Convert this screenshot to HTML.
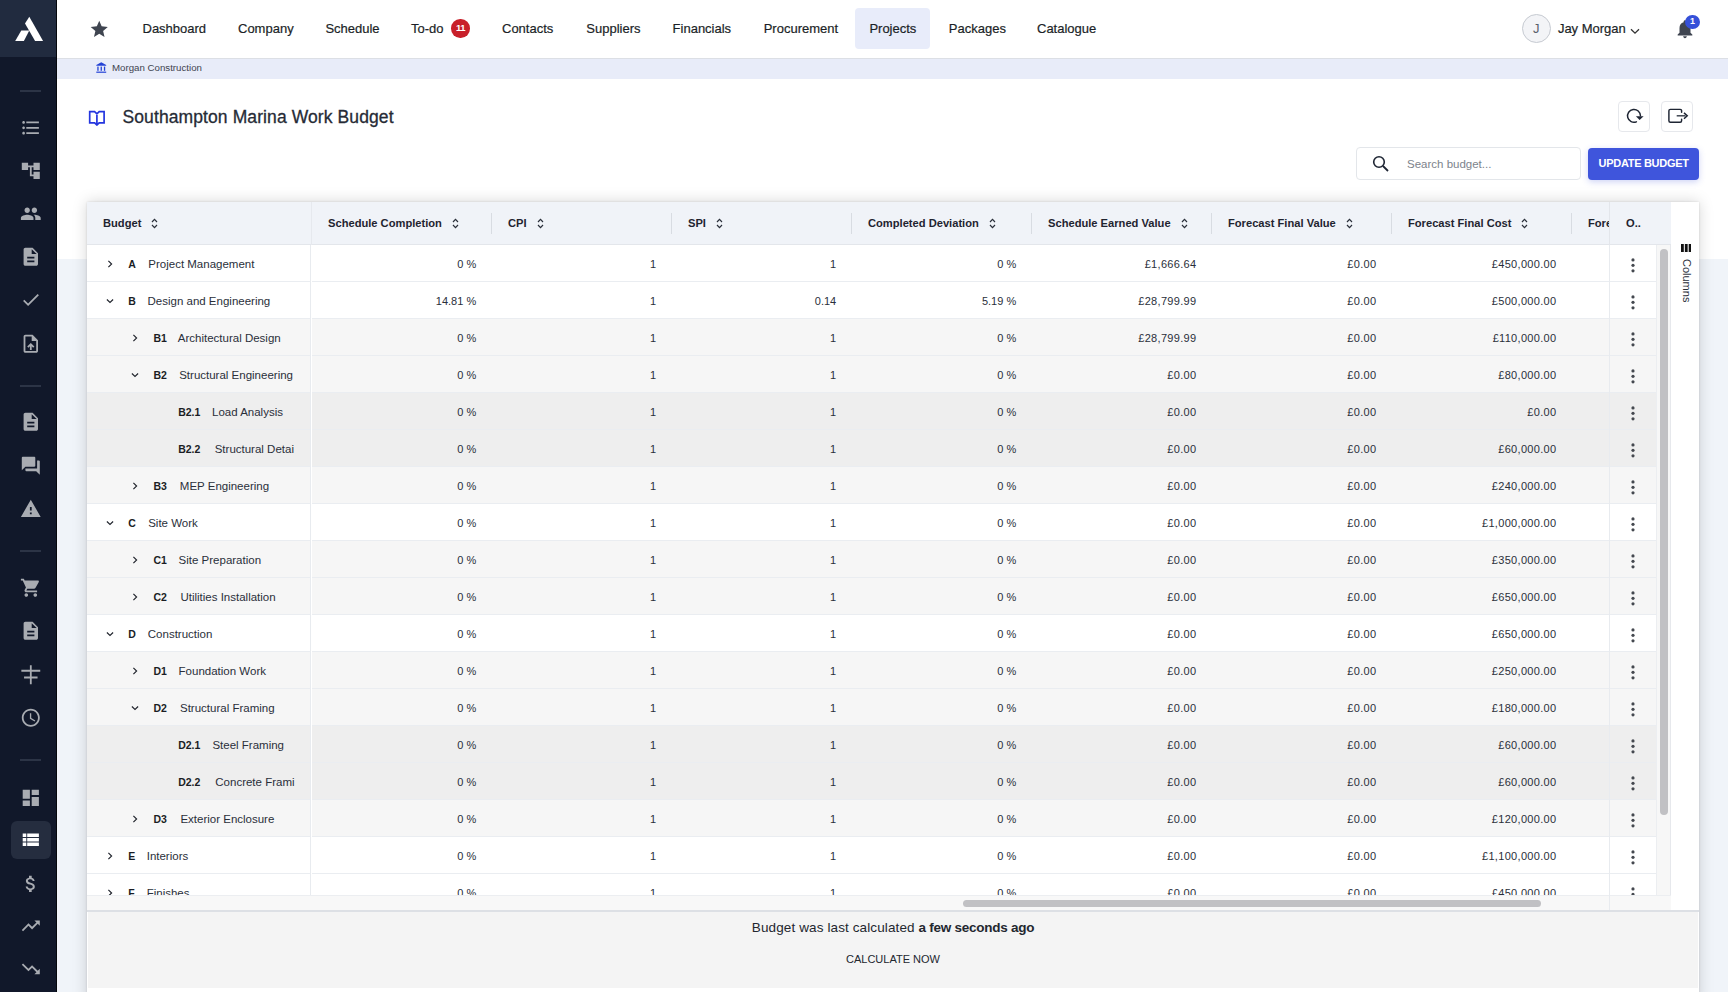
<!DOCTYPE html>
<html><head><meta charset="utf-8">
<style>
*{box-sizing:border-box;margin:0;padding:0}
html,body{width:1728px;height:992px;overflow:hidden;background:#fff;font-family:"Liberation Sans",sans-serif;color:#1f2430}
.abs{position:absolute}
#side{position:absolute;left:0;top:0;width:57px;height:992px;background:#11182a;border-right:1px solid #05070c}
#logo{position:absolute;left:0;top:0;width:56px;height:57px;background:#212b3f}
.sic{position:absolute;left:18px;width:22px;height:22px}
.sdiv{position:absolute;left:20px;width:21px;height:2px;background:#2c3446}
#nav{position:absolute;left:57px;top:0;width:1671px;height:59px;background:#fff;border-bottom:1px solid #dcdfe5}
.nv{position:absolute;top:21.4px;font-size:13px;font-weight:400;color:#1b1f27;white-space:nowrap;-webkit-text-stroke:0.2px #1b1f27}
#crumb{position:absolute;left:57px;top:59px;width:1671px;height:20px;background:#e8ecf9}
#pagebg{position:absolute;left:57px;top:259px;width:1671px;height:733px;background:#f0f4f9}
#card{position:absolute;left:87px;top:202px;width:1612px;height:800px;background:#fff;box-shadow:0 0 2px rgba(0,0,0,0.12),0 0 14px rgba(0,0,0,0.17)}
#hdr{position:absolute;left:0;top:0;width:1583px;height:43.2px;background:#f0f3f8;border-bottom:1px solid #e3e6eb}
.hd{position:absolute;top:15.0px;font-size:11.15px;font-weight:700;color:#1f2430;white-space:nowrap}
.sort{position:absolute;top:16px;width:7px;height:11px}
.hsep{position:absolute;top:10.5px;width:1px;height:21px;background:#d8dce2}
.rows{position:absolute;overflow:hidden}
.row{position:absolute;left:0;right:0;height:36.9px;border-bottom:1px solid #eaedf1}
.code{position:absolute;top:12.8px;font-size:10.5px;font-weight:700;color:#1a1d24;white-space:nowrap}
.name{position:absolute;top:12.7px;font-size:11.5px;color:#2a2f3a;white-space:nowrap}
.chw{position:absolute;top:14.7px;width:8px;height:8px;line-height:0}
.num{position:absolute;top:12.7px;width:164.2px;text-align:right;font-size:11px;color:#2a2f3a;white-space:nowrap}
.dots{position:absolute;left:21.4px;top:12.4px;width:4px;height:15px}
</style></head><body>
<div id="pagebg"></div>

<!-- Sidebar -->
<div id="side">
  <div id="logo">
    <svg class="abs" style="left:0;top:0" width="56" height="57" viewBox="0 0 56 57"><path d="M29.3 16.7 L43.1 41.1 L35.1 41.1 L25 23.6 Z" fill="#fff"/><path d="M21.3 30.5 L29.3 30.5 L23.9 41.1 L15.2 41.1 Z" fill="#fff"/></svg>
  </div>
  <div class="sdiv" style="top:90px"></div>
<div class="sdiv" style="top:385px"></div>
<div class="sdiv" style="top:550px"></div>
<div class="sdiv" style="top:759px"></div>
<div class="abs" style="left:11px;top:821px;width:40px;height:38px;border-radius:6px;background:#252d3f"></div>
<svg class="abs" style="left:19.8px;top:116.7px" width="21.6" height="21.6" viewBox="0 0 24 24"><path d="M4 10.5c-.83 0-1.5.67-1.5 1.5s.67 1.5 1.5 1.5 1.5-.67 1.5-1.5-.67-1.5-1.5-1.5zm0-6c-.83 0-1.5.67-1.5 1.5S3.17 7.5 4 7.5 5.5 6.83 5.5 6 4.83 4.5 4 4.5zm0 12c-.83 0-1.5.68-1.5 1.5s.68 1.5 1.5 1.5 1.5-.68 1.5-1.5-.67-1.5-1.5-1.5zM7 19h14v-2H7v2zm0-6h14v-2H7v2zm0-8v2h14V5H7z" fill="#a9acb2"/></svg>
<svg class="abs" style="left:19.8px;top:159.7px" width="21.6" height="21.6" viewBox="0 0 24 24"><path d="M22 11V3h-7v3H9V3H2v8h7V8h2v10h4v3h7v-8h-7v3h-2V8h2v3z" fill="#a9acb2"/></svg>
<svg class="abs" style="left:19.8px;top:203.2px" width="21.6" height="21.6" viewBox="0 0 24 24"><path d="M16 11c1.66 0 2.99-1.34 2.99-3S17.66 5 16 5c-1.66 0-3 1.34-3 3s1.34 3 3 3zm-8 0c1.66 0 2.99-1.34 2.99-3S9.66 5 8 5C6.34 5 5 6.34 5 8s1.34 3 3 3zm0 2c-2.33 0-7 1.17-7 3.5V19h14v-2.5c0-2.33-4.67-3.5-7-3.5zm8 0c-.29 0-.62.02-.97.05 1.160.84 1.97 1.97 1.97 3.45V19h6v-2.5c0-2.33-4.67-3.5-7-3.5z" fill="#a9acb2"/></svg>
<svg class="abs" style="left:19.8px;top:246.2px" width="21.6" height="21.6" viewBox="0 0 24 24"><path d="M14 2H6c-1.1 0-1.99.9-1.99 2L4 20c0 1.1.89 2 1.99 2H18c1.1 0 2-.9 2-2V8l-6-6zm2 16H8v-2h8v2zm0-4H8v-2h8v2zm-3-5V3.5L18.5 9H13z" fill="#a9acb2"/></svg>
<svg class="abs" style="left:19.8px;top:289.2px" width="21.6" height="21.6" viewBox="0 0 24 24"><path d="M9 16.17L4.83 12l-1.42 1.41L9 19 21 7l-1.41-1.41z" fill="#a9acb2"/></svg>
<svg class="abs" style="left:19.8px;top:332.7px" width="21.6" height="21.6" viewBox="0 0 24 24"><path d="M14 2H6c-1.1 0-1.99.9-1.99 2L4 20c0 1.1.89 2 1.99 2H18c1.1 0 2-.9 2-2V8l-6-6zm4 18H6V4h7v5h5v11zM8 15.01l1.41 1.41L11 14.84V19h2v-4.16l1.59 1.59L16 15.01 12.01 11z" fill="#a9acb2"/></svg>
<svg class="abs" style="left:19.8px;top:411.2px" width="21.6" height="21.6" viewBox="0 0 24 24"><path d="M14 2H6c-1.1 0-1.99.9-1.99 2L4 20c0 1.1.89 2 1.99 2H18c1.1 0 2-.9 2-2V8l-6-6zm2 16H8v-2h8v2zm0-4H8v-2h8v2zm-3-5V3.5L18.5 9H13z" fill="#a9acb2"/></svg>
<svg class="abs" style="left:19.8px;top:454.7px" width="21.6" height="21.6" viewBox="0 0 24 24"><path d="M21 6h-2v9H6v2c0 .55.45 1 1 1h11l4 4V7c0-.55-.45-1-1-1zm-4 6V3c0-.55-.45-1-1-1H3c-.55 0-1 .45-1 1v14l4-4h10c.55 0 1-.45 1-1z" fill="#a9acb2"/></svg>
<svg class="abs" style="left:19.8px;top:498.2px" width="21.6" height="21.6" viewBox="0 0 24 24"><path d="M1 21h22L12 2 1 21zm12-3h-2v-2h2v2zm0-4h-2v-4h2v4z" fill="#a9acb2"/></svg>
<svg class="abs" style="left:19.8px;top:577.2px" width="21.6" height="21.6" viewBox="0 0 24 24"><path d="M7 18c-1.1 0-1.99.9-1.99 2S5.9 22 7 22s2-.9 2-2-.9-2-2-2zM1 2v2h2l3.6 7.59-1.35 2.45c-.16.28-.25.61-.25.96 0 1.1.9 2 2 2h12v-2H7.42c-.14 0-.25-.11-.25-.25l.03-.12.9-1.630h7.45c.75 0 1.41-.41 1.75-1.03l3.58-6.49C21.25 4.82 20.76 4 20 4H5.21l-.94-2H1zm16 16c-1.1 0-1.99.9-1.99 2s.89 2 1.990 2 2-.9 2-2-.9-2-2-2z" fill="#a9acb2"/></svg>
<svg class="abs" style="left:19.8px;top:620.2px" width="21.6" height="21.6" viewBox="0 0 24 24"><path d="M14 2H6c-1.1 0-1.99.9-1.99 2L4 20c0 1.1.89 2 1.99 2H18c1.1 0 2-.9 2-2V8l-6-6zm2 16H8v-2h8v2zm0-4H8v-2h8v2zm-3-5V3.5L18.5 9H13z" fill="#a9acb2"/></svg>
<svg class="abs" style="left:19.8px;top:663.7px" width="21.6" height="21.6" viewBox="0 0 24 24"><path d="M11 1.5h2v21h-2z M1.5 6.5h21v2h-21z M4.5 14h15v2h-15z" fill="#a9acb2"/></svg>
<svg class="abs" style="left:19.8px;top:706.7px" width="21.6" height="21.6" viewBox="0 0 24 24"><path d="M11.99 2C6.47 2 2 6.48 2 12s4.47 10 9.99 10C17.52 22 22 17.52 22 12S17.52 2 11.99 2zM12 20c-4.42 0-8-3.58-8-8s3.58-8 8-8 8 3.58 8 8-3.58 8-8 8zm.5-13H11v6l5.25 3.15.75-1.23-4.5-2.67z" fill="#a9acb2"/></svg>
<svg class="abs" style="left:19.8px;top:786.7px" width="21.6" height="21.6" viewBox="0 0 24 24"><path d="M3 13h8V3H3v10zm0 8h8v-6H3v6zm10 0h8V11h-8v10zm0-18v6h8V3h-8z" fill="#a9acb2"/></svg>
<svg class="abs" style="left:19.8px;top:829.2px" width="21.6" height="21.6" viewBox="0 0 24 24"><path d="M3 14h4v-4H3v4zm0 5h4v-4H3v4zM3 9h4V5H3v4zm5 5h13v-4H8v4zm0 5h13v-4H8v4zM8 5v4h13V5H8z" fill="#ffffff"/></svg>
<svg class="abs" style="left:19.8px;top:872.7px" width="21.6" height="21.6" viewBox="0 0 24 24"><path d="M11.8 10.9c-2.27-.59-3-1.2-3-2.15 0-1.09 1.010-1.85 2.7-1.85 1.78 0 2.44.85 2.5 2.1h2.21c-.07-1.72-1.12-3.3-3.21-3.81V3h-3v2.160c-1.94.42-3.5 1.68-3.5 3.61 0 2.31 1.91 3.46 4.7 4.13 2.5.6 3 1.48 3 2.41 0 .69-.49 1.79-2.7 1.79-2.06 0-2.87-.92-2.98-2.1h-2.2c.12 2.19 1.76 3.42 3.68 3.830V21h3v-2.15c1.95-.37 3.5-1.5 3.5-3.55 0-2.84-2.43-3.81-4.7-4.4z" fill="#a9acb2"/></svg>
<svg class="abs" style="left:19.8px;top:915.2px" width="21.6" height="21.6" viewBox="0 0 24 24"><path d="M16 6l2.29 2.29-4.88 4.88-4-4L2 16.59 3.41 18l6-6 4 4 6.3-6.29L22 12V6z" fill="#a9acb2"/></svg>
<svg class="abs" style="left:19.8px;top:958.2px" width="21.6" height="21.6" viewBox="0 0 24 24"><path d="M16 18l2.29-2.29-4.88-4.88-4 4L2 7.41 3.41 6l6 6 4-4 6.3 6.29L22 12v6z" fill="#a9acb2"/></svg>
</div>

<!-- Nav -->
<div id="nav">
  <svg class="abs" style="left:32.3px;top:18.5px" width="20.5" height="20.5" viewBox="0 0 24 24"><path d="M12 17.27L18.18 21l-1.64-7.03L22 9.24l-7.19-.61L12 2 9.19 8.63 2 9.240l5.46 4.73L5.82 21z" fill="#3f4550"/></svg>
  <span class="nv" style="left:85.5px">Dashboard</span>
  <span class="nv" style="left:181px">Company</span>
  <span class="nv" style="left:268.4px">Schedule</span>
  <span class="nv" style="left:354px">To-do</span>
  <span class="abs" style="left:394.4px;top:19.4px;width:18.3px;height:18.3px;border-radius:50%;background:#c8202a;color:#fff;font-size:9.5px;font-weight:700;text-align:center;line-height:18.3px;letter-spacing:-0.5px">11</span>
  <span class="nv" style="left:445px">Contacts</span>
  <span class="nv" style="left:529.3px">Suppliers</span>
  <span class="nv" style="left:615.6px">Financials</span>
  <span class="nv" style="left:706.7px">Procurement</span>
  <span class="abs" style="left:797.8px;top:8.1px;width:75.4px;height:40.9px;border-radius:4px;background:#e8ecfa"></span>
  <span class="nv" style="left:812.4px">Projects</span>
  <span class="nv" style="left:891.8px">Packages</span>
  <span class="nv" style="left:980px">Catalogue</span>
  <span class="abs" style="left:1464.8px;top:14.4px;width:29px;height:29px;border-radius:50%;border:1px solid #c6cad1;background:#f3f4f7;color:#5a606b;font-size:13px;text-align:center;line-height:27px">J</span>
  <span class="nv" style="left:1500.9px">Jay Morgan</span>
  <svg class="abs" style="left:1573px;top:28px" width="10" height="7" viewBox="0 0 10 7"><path d="M1 1.2 L5 5.2 L9 1.2" fill="none" stroke="#333" stroke-width="1.3"/></svg>
  <svg class="abs" style="left:1617px;top:17.5px" width="22" height="22" viewBox="0 0 24 24"><path d="M12 22c1.1 0 2-.9 2-2h-4c0 1.1.89 2 2 2zm6-6v-5c0-3.07-1.64-5.64-4.5-6.32V4c0-.83-.67-1.5-1.5-1.5s-1.5.67-1.5 1.5v.68C7.63 5.36 6 7.92 6 11v5l-2 2v1h16v-1l-2-2z" fill="#3f4550"/></svg>
  <span class="abs" style="left:1628.3px;top:14.8px;width:14.5px;height:14px;border-radius:50%;background:#3550d8;color:#fff;font-size:9px;font-weight:700;text-align:center;line-height:13.5px">1</span>
</div>

<!-- Breadcrumb -->
<div id="crumb">
  <svg class="abs" style="left:38.5px;top:3.3px" width="11" height="11" viewBox="0 0 11 11"><path d="M5.25 0.2 L10.2 2.9 L10.2 3.7 L0.3 3.7 L0.3 2.9 Z" fill="#2443d6"/><rect x="1.3" y="4.6" width="1.3" height="4.2" fill="#2443d6"/><rect x="4.6" y="4.6" width="1.3" height="4.2" fill="#2443d6"/><rect x="7.9" y="4.6" width="1.3" height="4.2" fill="#2443d6"/><rect x="0.3" y="9.6" width="9.9" height="1.2" fill="#2443d6"/></svg>
  <span class="abs" style="left:55px;top:3.2px;font-size:9.7px;color:#3f4450;white-space:nowrap">Morgan Construction</span>
</div>

<!-- Title -->
<svg class="abs" style="left:88.2px;top:110px" width="18" height="16" viewBox="0 0 18 16"><path d="M1.7 1.7 H6.6 L8.9 3.8 L11.2 1.7 H16.1 V12.9 H11.2 L8.9 15 L6.6 12.9 H1.7 Z M8.9 3.8 V15" fill="none" stroke="#2436df" stroke-width="1.7" stroke-linejoin="miter"/></svg>
<span class="abs" style="left:122.5px;top:107.2px;font-size:17.5px;letter-spacing:0.1px;color:#262b36;white-space:nowrap;-webkit-text-stroke:0.3px #262b36">Southampton Marina Work Budget</span>

<!-- Right buttons -->
<div class="abs" style="left:1618px;top:101px;width:32px;height:31px;border:1px solid #e6e8ec;border-radius:4px;background:#fff"></div>
<svg class="abs" style="left:1624px;top:107px" width="22" height="20" viewBox="0 0 22 20"><path d="M12.4 14.85 A6.45 6.45 0 1 1 16.45 8.8" fill="none" stroke="#1e2533" stroke-width="1.45" stroke-linecap="round"/><path d="M11.9 9.2 L19.6 9.2 L15.6 12.9 Z" fill="#1e2533"/></svg>
<div class="abs" style="left:1661px;top:101px;width:32px;height:31px;border:1px solid #e6e8ec;border-radius:4px;background:#fff"></div>
<svg class="abs" style="left:1667px;top:107px" width="22" height="20" viewBox="0 0 22 20"><path d="M14.6 5.2 V3.8 Q14.6 2.35 13.1 2.35 H3.4 Q1.9 2.35 1.9 3.8 V13.85 Q1.9 15.3 3.4 15.3 H13.1 Q14.6 15.3 14.6 13.85 V12.3" fill="none" stroke="#1e2533" stroke-width="1.45" stroke-linecap="round"/><path d="M9.7 8.8 H18.5" stroke="#3a404b" stroke-width="1.45"/><path d="M17 5.9 L20.2 8.8 L17 11.7" fill="none" stroke="#1e2533" stroke-width="1.5"/></svg>

<!-- Search -->
<div class="abs" style="left:1356px;top:147px;width:225px;height:33px;border:1px solid #e3e6ea;border-radius:4px;background:#fff"></div>
<svg class="abs" style="left:1371px;top:154px" width="20" height="20" viewBox="0 0 20 20"><circle cx="8" cy="8" r="5.3" fill="none" stroke="#1e2533" stroke-width="1.6"/><path d="M12 12 L17 17" stroke="#1e2533" stroke-width="1.8"/></svg>
<span class="abs" style="left:1407px;top:158px;font-size:11.5px;color:#7d838c;white-space:nowrap">Search budget...</span>
<div class="abs" style="left:1588px;top:148px;width:111px;height:32px;border-radius:4px;background:#3f55dc;box-shadow:0 2px 6px rgba(63,85,220,0.25)"></div>
<span class="abs" style="left:1598.6px;top:157.1px;font-size:11px;font-weight:700;color:#fff;white-space:nowrap;letter-spacing:-0.3px">UPDATE BUDGET</span>

<!-- Card -->
<div id="card">
  <div id="hdr">
    <span class="hd" style="left:16px">Budget</span>
    <span class="abs" style="left:224px;top:0;width:1px;height:43.2px;background:#e6e9ee"></span>
    <svg class="sort" style="left:64px" width="7" height="11" viewBox="0 0 7 11"><path d="M1 4 L3.5 1.3 L6 4 M1 7 L3.5 9.7 L6 7" fill="none" stroke="#2a2f3a" stroke-width="1.2"/></svg>
<span class="hd" style="left:241px">Schedule Completion</span>
<svg class="sort" style="left:364.90625px" width="7" height="11" viewBox="0 0 7 11"><path d="M1 4 L3.5 1.3 L6 4 M1 7 L3.5 9.7 L6 7" fill="none" stroke="#2a2f3a" stroke-width="1.2"/></svg>
<span class="hsep" style="left:404px"></span>
<span class="hd" style="left:421px">CPI</span>
<svg class="sort" style="left:449.578125px" width="7" height="11" viewBox="0 0 7 11"><path d="M1 4 L3.5 1.3 L6 4 M1 7 L3.5 9.7 L6 7" fill="none" stroke="#2a2f3a" stroke-width="1.2"/></svg>
<span class="hsep" style="left:584px"></span>
<span class="hd" style="left:601px">SPI</span>
<svg class="sort" style="left:628.96875px" width="7" height="11" viewBox="0 0 7 11"><path d="M1 4 L3.5 1.3 L6 4 M1 7 L3.5 9.7 L6 7" fill="none" stroke="#2a2f3a" stroke-width="1.2"/></svg>
<span class="hsep" style="left:764px"></span>
<span class="hd" style="left:781px">Completed Deviation</span>
<svg class="sort" style="left:901.8125px" width="7" height="11" viewBox="0 0 7 11"><path d="M1 4 L3.5 1.3 L6 4 M1 7 L3.5 9.7 L6 7" fill="none" stroke="#2a2f3a" stroke-width="1.2"/></svg>
<span class="hsep" style="left:944px"></span>
<span class="hd" style="left:961px">Schedule Earned Value</span>
<svg class="sort" style="left:1093.609375px" width="7" height="11" viewBox="0 0 7 11"><path d="M1 4 L3.5 1.3 L6 4 M1 7 L3.5 9.7 L6 7" fill="none" stroke="#2a2f3a" stroke-width="1.2"/></svg>
<span class="hsep" style="left:1124px"></span>
<span class="hd" style="left:1141px">Forecast Final Value</span>
<svg class="sort" style="left:1258.734375px" width="7" height="11" viewBox="0 0 7 11"><path d="M1 4 L3.5 1.3 L6 4 M1 7 L3.5 9.7 L6 7" fill="none" stroke="#2a2f3a" stroke-width="1.2"/></svg>
<span class="hsep" style="left:1304px"></span>
<span class="hd" style="left:1321px">Forecast Final Cost</span>
<svg class="sort" style="left:1434.390625px" width="7" height="11" viewBox="0 0 7 11"><path d="M1 4 L3.5 1.3 L6 4 M1 7 L3.5 9.7 L6 7" fill="none" stroke="#2a2f3a" stroke-width="1.2"/></svg>
<span class="hsep" style="left:1484px"></span>
<span class="hd" style="left:1501px">Fore</span>
  </div>
  <!-- pinned left -->
  <div class="rows" style="left:0;top:43.2px;width:224px;height:650px;border-right:1px solid #e8ebef">
    <div class="row" style="top:0px;background:#ffffff"><span class="chw" style="left:19.2px"><svg class="chev" width="8" height="8" viewBox="0 0 8 8"><path d="M2.4 0.9 L5.6 4 L2.4 7.1" fill="none" stroke="#1f232b" stroke-width="1.15"/></svg></span><span class="code" style="left:41.2px">A</span><span class="name" style="left:61.30000000000001px">Project Management</span></div>
<div class="row" style="top:37px;background:#ffffff"><span class="chw" style="left:19.2px"><svg class="chev" width="8" height="8" viewBox="0 0 8 8"><path d="M0.9 2.5 L4 5.5 L7.1 2.5" fill="none" stroke="#1f232b" stroke-width="1.15"/></svg></span><span class="code" style="left:41.2px">B</span><span class="name" style="left:60.5px">Design and Engineering</span></div>
<div class="row" style="top:74px;background:#f6f6f6"><span class="chw" style="left:44.2px"><svg class="chev" width="8" height="8" viewBox="0 0 8 8"><path d="M2.4 0.9 L5.6 4 L2.4 7.1" fill="none" stroke="#1f232b" stroke-width="1.15"/></svg></span><span class="code" style="left:66.4px">B1</span><span class="name" style="left:90.80000000000001px">Architectural Design</span></div>
<div class="row" style="top:111px;background:#f6f6f6"><span class="chw" style="left:44.2px"><svg class="chev" width="8" height="8" viewBox="0 0 8 8"><path d="M0.9 2.5 L4 5.5 L7.1 2.5" fill="none" stroke="#1f232b" stroke-width="1.15"/></svg></span><span class="code" style="left:66.4px">B2</span><span class="name" style="left:92.19999999999999px">Structural Engineering</span></div>
<div class="row" style="top:148px;background:#eeeeee"><span class="code" style="left:91.2px">B2.1</span><span class="name" style="left:125px">Load Analysis</span></div>
<div class="row" style="top:185px;background:#eeeeee"><span class="code" style="left:91.2px">B2.2</span><span class="name" style="left:127.69999999999999px">Structural Detai</span></div>
<div class="row" style="top:222px;background:#f6f6f6"><span class="chw" style="left:44.2px"><svg class="chev" width="8" height="8" viewBox="0 0 8 8"><path d="M2.4 0.9 L5.6 4 L2.4 7.1" fill="none" stroke="#1f232b" stroke-width="1.15"/></svg></span><span class="code" style="left:66.4px">B3</span><span class="name" style="left:92.80000000000001px">MEP Engineering</span></div>
<div class="row" style="top:259px;background:#ffffff"><span class="chw" style="left:19.2px"><svg class="chev" width="8" height="8" viewBox="0 0 8 8"><path d="M0.9 2.5 L4 5.5 L7.1 2.5" fill="none" stroke="#1f232b" stroke-width="1.15"/></svg></span><span class="code" style="left:41.2px">C</span><span class="name" style="left:61.19999999999999px">Site Work</span></div>
<div class="row" style="top:296px;background:#f6f6f6"><span class="chw" style="left:44.2px"><svg class="chev" width="8" height="8" viewBox="0 0 8 8"><path d="M2.4 0.9 L5.6 4 L2.4 7.1" fill="none" stroke="#1f232b" stroke-width="1.15"/></svg></span><span class="code" style="left:66.4px">C1</span><span class="name" style="left:91.6px">Site Preparation</span></div>
<div class="row" style="top:333px;background:#f6f6f6"><span class="chw" style="left:44.2px"><svg class="chev" width="8" height="8" viewBox="0 0 8 8"><path d="M2.4 0.9 L5.6 4 L2.4 7.1" fill="none" stroke="#1f232b" stroke-width="1.15"/></svg></span><span class="code" style="left:66.4px">C2</span><span class="name" style="left:93.4px">Utilities Installation</span></div>
<div class="row" style="top:370px;background:#ffffff"><span class="chw" style="left:19.2px"><svg class="chev" width="8" height="8" viewBox="0 0 8 8"><path d="M0.9 2.5 L4 5.5 L7.1 2.5" fill="none" stroke="#1f232b" stroke-width="1.15"/></svg></span><span class="code" style="left:41.2px">D</span><span class="name" style="left:60.80000000000001px">Construction</span></div>
<div class="row" style="top:407px;background:#f6f6f6"><span class="chw" style="left:44.2px"><svg class="chev" width="8" height="8" viewBox="0 0 8 8"><path d="M2.4 0.9 L5.6 4 L2.4 7.1" fill="none" stroke="#1f232b" stroke-width="1.15"/></svg></span><span class="code" style="left:66.4px">D1</span><span class="name" style="left:91.6px">Foundation Work</span></div>
<div class="row" style="top:444px;background:#f6f6f6"><span class="chw" style="left:44.2px"><svg class="chev" width="8" height="8" viewBox="0 0 8 8"><path d="M0.9 2.5 L4 5.5 L7.1 2.5" fill="none" stroke="#1f232b" stroke-width="1.15"/></svg></span><span class="code" style="left:66.4px">D2</span><span class="name" style="left:93px">Structural Framing</span></div>
<div class="row" style="top:481px;background:#eeeeee"><span class="code" style="left:91.2px">D2.1</span><span class="name" style="left:125.4px">Steel Framing</span></div>
<div class="row" style="top:518px;background:#eeeeee"><span class="code" style="left:91.2px">D2.2</span><span class="name" style="left:128.3px">Concrete Frami</span></div>
<div class="row" style="top:555px;background:#f6f6f6"><span class="chw" style="left:44.2px"><svg class="chev" width="8" height="8" viewBox="0 0 8 8"><path d="M2.4 0.9 L5.6 4 L2.4 7.1" fill="none" stroke="#1f232b" stroke-width="1.15"/></svg></span><span class="code" style="left:66.4px">D3</span><span class="name" style="left:93.4px">Exterior Enclosure</span></div>
<div class="row" style="top:592px;background:#ffffff"><span class="chw" style="left:19.2px"><svg class="chev" width="8" height="8" viewBox="0 0 8 8"><path d="M2.4 0.9 L5.6 4 L2.4 7.1" fill="none" stroke="#1f232b" stroke-width="1.15"/></svg></span><span class="code" style="left:41.2px">E</span><span class="name" style="left:59.69999999999999px">Interiors</span></div>
<div class="row" style="top:629px;background:#ffffff"><span class="chw" style="left:19.2px"><svg class="chev" width="8" height="8" viewBox="0 0 8 8"><path d="M2.4 0.9 L5.6 4 L2.4 7.1" fill="none" stroke="#1f232b" stroke-width="1.15"/></svg></span><span class="code" style="left:41.2px">F</span><span class="name" style="left:59.69999999999999px">Finishes</span></div>
  </div>
  <div class="rows" style="left:225px;top:43.2px;width:1297px;height:650px">
    <div class="row" style="top:0px;background:#ffffff"><span class="num" style="left:0px">0 %</span><span class="num" style="left:180px">1</span><span class="num" style="left:360px">1</span><span class="num" style="left:540px">0 %</span><span class="num" style="left:720px;width:164.5px;letter-spacing:0.32px">£1,666.64</span><span class="num" style="left:900px;width:164.5px;letter-spacing:0.32px">£0.00</span><span class="num" style="left:1080px;width:164.5px;letter-spacing:0.32px">£450,000.00</span></div>
<div class="row" style="top:37px;background:#ffffff"><span class="num" style="left:0px">14.81 %</span><span class="num" style="left:180px">1</span><span class="num" style="left:360px">0.14</span><span class="num" style="left:540px">5.19 %</span><span class="num" style="left:720px;width:164.5px;letter-spacing:0.32px">£28,799.99</span><span class="num" style="left:900px;width:164.5px;letter-spacing:0.32px">£0.00</span><span class="num" style="left:1080px;width:164.5px;letter-spacing:0.32px">£500,000.00</span></div>
<div class="row" style="top:74px;background:#f6f6f6"><span class="num" style="left:0px">0 %</span><span class="num" style="left:180px">1</span><span class="num" style="left:360px">1</span><span class="num" style="left:540px">0 %</span><span class="num" style="left:720px;width:164.5px;letter-spacing:0.32px">£28,799.99</span><span class="num" style="left:900px;width:164.5px;letter-spacing:0.32px">£0.00</span><span class="num" style="left:1080px;width:164.5px;letter-spacing:0.32px">£110,000.00</span></div>
<div class="row" style="top:111px;background:#f6f6f6"><span class="num" style="left:0px">0 %</span><span class="num" style="left:180px">1</span><span class="num" style="left:360px">1</span><span class="num" style="left:540px">0 %</span><span class="num" style="left:720px;width:164.5px;letter-spacing:0.32px">£0.00</span><span class="num" style="left:900px;width:164.5px;letter-spacing:0.32px">£0.00</span><span class="num" style="left:1080px;width:164.5px;letter-spacing:0.32px">£80,000.00</span></div>
<div class="row" style="top:148px;background:#eeeeee"><span class="num" style="left:0px">0 %</span><span class="num" style="left:180px">1</span><span class="num" style="left:360px">1</span><span class="num" style="left:540px">0 %</span><span class="num" style="left:720px;width:164.5px;letter-spacing:0.32px">£0.00</span><span class="num" style="left:900px;width:164.5px;letter-spacing:0.32px">£0.00</span><span class="num" style="left:1080px;width:164.5px;letter-spacing:0.32px">£0.00</span></div>
<div class="row" style="top:185px;background:#eeeeee"><span class="num" style="left:0px">0 %</span><span class="num" style="left:180px">1</span><span class="num" style="left:360px">1</span><span class="num" style="left:540px">0 %</span><span class="num" style="left:720px;width:164.5px;letter-spacing:0.32px">£0.00</span><span class="num" style="left:900px;width:164.5px;letter-spacing:0.32px">£0.00</span><span class="num" style="left:1080px;width:164.5px;letter-spacing:0.32px">£60,000.00</span></div>
<div class="row" style="top:222px;background:#f6f6f6"><span class="num" style="left:0px">0 %</span><span class="num" style="left:180px">1</span><span class="num" style="left:360px">1</span><span class="num" style="left:540px">0 %</span><span class="num" style="left:720px;width:164.5px;letter-spacing:0.32px">£0.00</span><span class="num" style="left:900px;width:164.5px;letter-spacing:0.32px">£0.00</span><span class="num" style="left:1080px;width:164.5px;letter-spacing:0.32px">£240,000.00</span></div>
<div class="row" style="top:259px;background:#ffffff"><span class="num" style="left:0px">0 %</span><span class="num" style="left:180px">1</span><span class="num" style="left:360px">1</span><span class="num" style="left:540px">0 %</span><span class="num" style="left:720px;width:164.5px;letter-spacing:0.32px">£0.00</span><span class="num" style="left:900px;width:164.5px;letter-spacing:0.32px">£0.00</span><span class="num" style="left:1080px;width:164.5px;letter-spacing:0.32px">£1,000,000.00</span></div>
<div class="row" style="top:296px;background:#f6f6f6"><span class="num" style="left:0px">0 %</span><span class="num" style="left:180px">1</span><span class="num" style="left:360px">1</span><span class="num" style="left:540px">0 %</span><span class="num" style="left:720px;width:164.5px;letter-spacing:0.32px">£0.00</span><span class="num" style="left:900px;width:164.5px;letter-spacing:0.32px">£0.00</span><span class="num" style="left:1080px;width:164.5px;letter-spacing:0.32px">£350,000.00</span></div>
<div class="row" style="top:333px;background:#f6f6f6"><span class="num" style="left:0px">0 %</span><span class="num" style="left:180px">1</span><span class="num" style="left:360px">1</span><span class="num" style="left:540px">0 %</span><span class="num" style="left:720px;width:164.5px;letter-spacing:0.32px">£0.00</span><span class="num" style="left:900px;width:164.5px;letter-spacing:0.32px">£0.00</span><span class="num" style="left:1080px;width:164.5px;letter-spacing:0.32px">£650,000.00</span></div>
<div class="row" style="top:370px;background:#ffffff"><span class="num" style="left:0px">0 %</span><span class="num" style="left:180px">1</span><span class="num" style="left:360px">1</span><span class="num" style="left:540px">0 %</span><span class="num" style="left:720px;width:164.5px;letter-spacing:0.32px">£0.00</span><span class="num" style="left:900px;width:164.5px;letter-spacing:0.32px">£0.00</span><span class="num" style="left:1080px;width:164.5px;letter-spacing:0.32px">£650,000.00</span></div>
<div class="row" style="top:407px;background:#f6f6f6"><span class="num" style="left:0px">0 %</span><span class="num" style="left:180px">1</span><span class="num" style="left:360px">1</span><span class="num" style="left:540px">0 %</span><span class="num" style="left:720px;width:164.5px;letter-spacing:0.32px">£0.00</span><span class="num" style="left:900px;width:164.5px;letter-spacing:0.32px">£0.00</span><span class="num" style="left:1080px;width:164.5px;letter-spacing:0.32px">£250,000.00</span></div>
<div class="row" style="top:444px;background:#f6f6f6"><span class="num" style="left:0px">0 %</span><span class="num" style="left:180px">1</span><span class="num" style="left:360px">1</span><span class="num" style="left:540px">0 %</span><span class="num" style="left:720px;width:164.5px;letter-spacing:0.32px">£0.00</span><span class="num" style="left:900px;width:164.5px;letter-spacing:0.32px">£0.00</span><span class="num" style="left:1080px;width:164.5px;letter-spacing:0.32px">£180,000.00</span></div>
<div class="row" style="top:481px;background:#eeeeee"><span class="num" style="left:0px">0 %</span><span class="num" style="left:180px">1</span><span class="num" style="left:360px">1</span><span class="num" style="left:540px">0 %</span><span class="num" style="left:720px;width:164.5px;letter-spacing:0.32px">£0.00</span><span class="num" style="left:900px;width:164.5px;letter-spacing:0.32px">£0.00</span><span class="num" style="left:1080px;width:164.5px;letter-spacing:0.32px">£60,000.00</span></div>
<div class="row" style="top:518px;background:#eeeeee"><span class="num" style="left:0px">0 %</span><span class="num" style="left:180px">1</span><span class="num" style="left:360px">1</span><span class="num" style="left:540px">0 %</span><span class="num" style="left:720px;width:164.5px;letter-spacing:0.32px">£0.00</span><span class="num" style="left:900px;width:164.5px;letter-spacing:0.32px">£0.00</span><span class="num" style="left:1080px;width:164.5px;letter-spacing:0.32px">£60,000.00</span></div>
<div class="row" style="top:555px;background:#f6f6f6"><span class="num" style="left:0px">0 %</span><span class="num" style="left:180px">1</span><span class="num" style="left:360px">1</span><span class="num" style="left:540px">0 %</span><span class="num" style="left:720px;width:164.5px;letter-spacing:0.32px">£0.00</span><span class="num" style="left:900px;width:164.5px;letter-spacing:0.32px">£0.00</span><span class="num" style="left:1080px;width:164.5px;letter-spacing:0.32px">£120,000.00</span></div>
<div class="row" style="top:592px;background:#ffffff"><span class="num" style="left:0px">0 %</span><span class="num" style="left:180px">1</span><span class="num" style="left:360px">1</span><span class="num" style="left:540px">0 %</span><span class="num" style="left:720px;width:164.5px;letter-spacing:0.32px">£0.00</span><span class="num" style="left:900px;width:164.5px;letter-spacing:0.32px">£0.00</span><span class="num" style="left:1080px;width:164.5px;letter-spacing:0.32px">£1,100,000.00</span></div>
<div class="row" style="top:629px;background:#ffffff"><span class="num" style="left:0px">0 %</span><span class="num" style="left:180px">1</span><span class="num" style="left:360px">1</span><span class="num" style="left:540px">0 %</span><span class="num" style="left:720px;width:164.5px;letter-spacing:0.32px">£0.00</span><span class="num" style="left:900px;width:164.5px;letter-spacing:0.32px">£0.00</span><span class="num" style="left:1080px;width:164.5px;letter-spacing:0.32px">£450,000.00</span></div>
  </div>
  <div class="rows" style="left:1522px;top:43.2px;width:47px;height:650px;border-left:1px solid #e8ebef">
    <div class="row" style="top:0px;background:#ffffff"><svg class="dots" width="4" height="15" viewBox="0 0 4 15"><circle cx="2" cy="1.9" r="1.6" fill="#44484f"/><circle cx="2" cy="7.35" r="1.6" fill="#44484f"/><circle cx="2" cy="12.8" r="1.6" fill="#44484f"/></svg></div>
<div class="row" style="top:37px;background:#ffffff"><svg class="dots" width="4" height="15" viewBox="0 0 4 15"><circle cx="2" cy="1.9" r="1.6" fill="#44484f"/><circle cx="2" cy="7.35" r="1.6" fill="#44484f"/><circle cx="2" cy="12.8" r="1.6" fill="#44484f"/></svg></div>
<div class="row" style="top:74px;background:#f6f6f6"><svg class="dots" width="4" height="15" viewBox="0 0 4 15"><circle cx="2" cy="1.9" r="1.6" fill="#44484f"/><circle cx="2" cy="7.35" r="1.6" fill="#44484f"/><circle cx="2" cy="12.8" r="1.6" fill="#44484f"/></svg></div>
<div class="row" style="top:111px;background:#f6f6f6"><svg class="dots" width="4" height="15" viewBox="0 0 4 15"><circle cx="2" cy="1.9" r="1.6" fill="#44484f"/><circle cx="2" cy="7.35" r="1.6" fill="#44484f"/><circle cx="2" cy="12.8" r="1.6" fill="#44484f"/></svg></div>
<div class="row" style="top:148px;background:#eeeeee"><svg class="dots" width="4" height="15" viewBox="0 0 4 15"><circle cx="2" cy="1.9" r="1.6" fill="#44484f"/><circle cx="2" cy="7.35" r="1.6" fill="#44484f"/><circle cx="2" cy="12.8" r="1.6" fill="#44484f"/></svg></div>
<div class="row" style="top:185px;background:#eeeeee"><svg class="dots" width="4" height="15" viewBox="0 0 4 15"><circle cx="2" cy="1.9" r="1.6" fill="#44484f"/><circle cx="2" cy="7.35" r="1.6" fill="#44484f"/><circle cx="2" cy="12.8" r="1.6" fill="#44484f"/></svg></div>
<div class="row" style="top:222px;background:#f6f6f6"><svg class="dots" width="4" height="15" viewBox="0 0 4 15"><circle cx="2" cy="1.9" r="1.6" fill="#44484f"/><circle cx="2" cy="7.35" r="1.6" fill="#44484f"/><circle cx="2" cy="12.8" r="1.6" fill="#44484f"/></svg></div>
<div class="row" style="top:259px;background:#ffffff"><svg class="dots" width="4" height="15" viewBox="0 0 4 15"><circle cx="2" cy="1.9" r="1.6" fill="#44484f"/><circle cx="2" cy="7.35" r="1.6" fill="#44484f"/><circle cx="2" cy="12.8" r="1.6" fill="#44484f"/></svg></div>
<div class="row" style="top:296px;background:#f6f6f6"><svg class="dots" width="4" height="15" viewBox="0 0 4 15"><circle cx="2" cy="1.9" r="1.6" fill="#44484f"/><circle cx="2" cy="7.35" r="1.6" fill="#44484f"/><circle cx="2" cy="12.8" r="1.6" fill="#44484f"/></svg></div>
<div class="row" style="top:333px;background:#f6f6f6"><svg class="dots" width="4" height="15" viewBox="0 0 4 15"><circle cx="2" cy="1.9" r="1.6" fill="#44484f"/><circle cx="2" cy="7.35" r="1.6" fill="#44484f"/><circle cx="2" cy="12.8" r="1.6" fill="#44484f"/></svg></div>
<div class="row" style="top:370px;background:#ffffff"><svg class="dots" width="4" height="15" viewBox="0 0 4 15"><circle cx="2" cy="1.9" r="1.6" fill="#44484f"/><circle cx="2" cy="7.35" r="1.6" fill="#44484f"/><circle cx="2" cy="12.8" r="1.6" fill="#44484f"/></svg></div>
<div class="row" style="top:407px;background:#f6f6f6"><svg class="dots" width="4" height="15" viewBox="0 0 4 15"><circle cx="2" cy="1.9" r="1.6" fill="#44484f"/><circle cx="2" cy="7.35" r="1.6" fill="#44484f"/><circle cx="2" cy="12.8" r="1.6" fill="#44484f"/></svg></div>
<div class="row" style="top:444px;background:#f6f6f6"><svg class="dots" width="4" height="15" viewBox="0 0 4 15"><circle cx="2" cy="1.9" r="1.6" fill="#44484f"/><circle cx="2" cy="7.35" r="1.6" fill="#44484f"/><circle cx="2" cy="12.8" r="1.6" fill="#44484f"/></svg></div>
<div class="row" style="top:481px;background:#eeeeee"><svg class="dots" width="4" height="15" viewBox="0 0 4 15"><circle cx="2" cy="1.9" r="1.6" fill="#44484f"/><circle cx="2" cy="7.35" r="1.6" fill="#44484f"/><circle cx="2" cy="12.8" r="1.6" fill="#44484f"/></svg></div>
<div class="row" style="top:518px;background:#eeeeee"><svg class="dots" width="4" height="15" viewBox="0 0 4 15"><circle cx="2" cy="1.9" r="1.6" fill="#44484f"/><circle cx="2" cy="7.35" r="1.6" fill="#44484f"/><circle cx="2" cy="12.8" r="1.6" fill="#44484f"/></svg></div>
<div class="row" style="top:555px;background:#f6f6f6"><svg class="dots" width="4" height="15" viewBox="0 0 4 15"><circle cx="2" cy="1.9" r="1.6" fill="#44484f"/><circle cx="2" cy="7.35" r="1.6" fill="#44484f"/><circle cx="2" cy="12.8" r="1.6" fill="#44484f"/></svg></div>
<div class="row" style="top:592px;background:#ffffff"><svg class="dots" width="4" height="15" viewBox="0 0 4 15"><circle cx="2" cy="1.9" r="1.6" fill="#44484f"/><circle cx="2" cy="7.35" r="1.6" fill="#44484f"/><circle cx="2" cy="12.8" r="1.6" fill="#44484f"/></svg></div>
<div class="row" style="top:629px;background:#ffffff"><svg class="dots" width="4" height="15" viewBox="0 0 4 15"><circle cx="2" cy="1.9" r="1.6" fill="#44484f"/><circle cx="2" cy="7.35" r="1.6" fill="#44484f"/><circle cx="2" cy="12.8" r="1.6" fill="#44484f"/></svg></div>
  </div>

  <!-- right pinned header -->
  <div class="abs" style="left:1522px;top:0;width:62px;height:43.2px;background:#f0f3f8;border-left:1px solid #e3e6eb;border-bottom:1px solid #e3e6eb"></div>
  <span class="hd" style="left:1539px">O..</span>
  <!-- vertical scrollbar -->
  <div class="abs" style="left:1569.4px;top:43.2px;width:14.6px;height:650px;background:#f7f7f7;border-left:1px solid #eceef1;border-right:1px solid #e6e8ec"></div>
  <div class="abs" style="left:1573.1px;top:46.5px;width:7.8px;height:566px;border-radius:4px;background:#c1c1c4"></div>
  <!-- columns side panel -->
  <div class="abs" style="left:1584px;top:0;width:28px;height:709px;background:#fff"></div>
  <svg class="abs" style="left:1593.6px;top:42px" width="10.5" height="8" viewBox="0 0 10.5 8"><rect x="0" y="0" width="2.8" height="8" fill="#111"/><rect x="3.85" y="0" width="2.8" height="8" fill="#111"/><rect x="7.7" y="0" width="2.8" height="8" fill="#111"/></svg>
  <span class="abs" style="left:1591.5px;top:57px;font-size:11px;color:#2a2f3a;white-space:nowrap;transform-origin:0 0;transform:translate(14px,0) rotate(90deg)">Columns</span>
  <!-- horizontal scrollbar -->
  <div class="abs" style="left:0;top:693.3px;width:1584px;height:15px;background:#f8f8f8;border-top:1px solid #eceef1"></div>
  <div class="abs" style="left:1522px;top:693.3px;width:1px;height:15px;background:#e8ebef"></div>
  <div class="abs" style="left:876.4px;top:697.7px;width:577.6px;height:7.8px;border-radius:4px;background:#c1c1c4"></div>
  <div class="abs" style="left:0;top:708px;width:1612px;height:2px;background:#dde0e5"></div>
  <!-- footer -->
  <div class="abs" style="left:1px;top:710px;width:1610px;height:75.7px;background:#f4f4f4"></div>
  <div class="abs" style="left:0;top:718.2px;width:1612px;text-align:center;font-size:13.5px;color:#23272f;white-space:nowrap"><span style="letter-spacing:0.12px">Budget was last calculated </span><b style="letter-spacing:-0.26px">a few seconds ago</b></div>
  <div class="abs" style="left:0;top:751px;width:1612px;text-align:center;font-size:11px;color:#23272f;white-space:nowrap">CALCULATE NOW</div>
</div>
</body></html>
